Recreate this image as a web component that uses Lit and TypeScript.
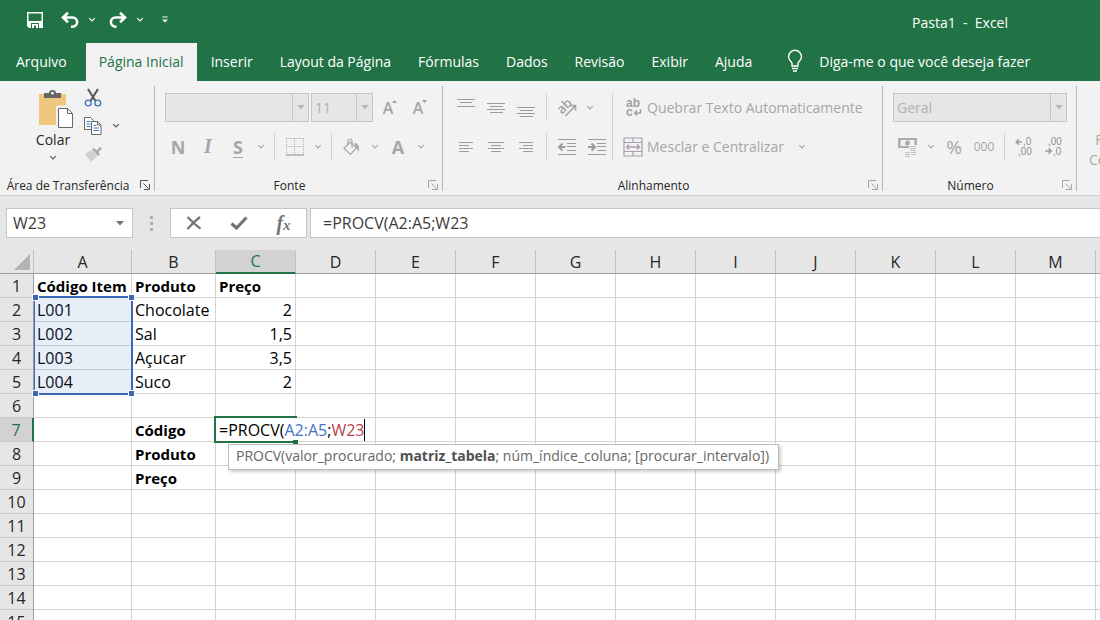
import { LitElement, html, css, svg, nothing } from "lit";
import { customElement, state } from "lit/decorators.js";
import { classMap } from "lit/directives/class-map.js";

const GREY = "#a6a6a6";

const icon = (w: number, h: number, body: unknown) =>
  html`<svg width=${w} height=${h} viewBox="0 0 ${w} ${h}" fill="none" aria-hidden="true">${body}</svg>`;

const chevron = icon(8, 6, svg`<path d="M1.2 1.2 4 4l2.8-2.8" stroke="currentColor" stroke-width="1.2"/>`);
const triangle = icon(8, 5, svg`<path d="M0 0h8L4 4.5z" fill="currentColor"/>`);
const launcher = icon(
  10,
  10,
  svg`<path d="M.5 8V.5H8M3.5 3.5l5 5M9.5 4v5.5H4" stroke="currentColor"/>`
);

const lines = (rows: number[][]) =>
  icon(
    20,
    20,
    rows.map(([x, y, w]) => svg`<path d="M${x} ${y + 0.5}h${w}" stroke="#9c9c9c"/>`)
  );

const icons = {
  save: icon(
    16,
    16,
    svg`<path d="M0 0h16v16H2l-2-2z" fill="#fff"/><path d="M1.500 1.500h13V9h-13zM4 11h8v5H4z" fill="#217346"/><path d="M5 12h6v4H9v-2.500H7V16H5z" fill="#fff"/>`
  ),
  undo: icon(
    18,
    16,
    svg`<path d="M2 5.500h9.500a4.600 4.600 0 0 1 0 9.200H10" stroke="#fff" stroke-width="2.600"/><path d="M7 .8 2 5.500l5 4.700" stroke="#fff" stroke-width="2.600"/>`
  ),
  redo: icon(
    18,
    16,
    svg`<path d="M16 5.500H6.500a4.600 4.600 0 0 0 0 9.200h1" stroke="#fff" stroke-width="2.600"/><path d="m11 .8 5 4.700-5 4.700" stroke="#fff" stroke-width="2.600"/>`
  ),
  customize: icon(6, 8, svg`<path d="M.5 1h5" stroke="#fff"/><path d="M0 3.500h6l-3 3z" fill="#fff"/>`),
  bulb: icon(
    16,
    22,
    svg`<path d="M5 16v-2.500C5 11.500 1.500 10.500 1.500 6.800a6.500 6.500 0 0 1 13 0C14.500 10.500 11 11.500 11 13.500V16zM5 18.500h6M6 21h4" stroke="#fff" stroke-width="1.400"/>`
  ),
  paste: icon(
    36,
    40,
    svg`<path d="M1 4h27v31H1z" fill="#eec77c"/><path d="M6 3h5a3.500 3 0 0 1 7 0h5v5H6z" fill="#666"/><circle cx="14.500" cy="3.200" r="1.400" fill="#f2f2f2"/><path d="M19.500 17h9l6 6v15h-15z" fill="#fff" stroke="#f2f2f2" stroke-width="3"/><path d="M20.500 18.500h9l5 5V37.500h-14z" fill="#fff" stroke="#666"/><path d="M29.500 18.500v5h5" stroke="#666"/>`
  ),
  cut: icon(
    18,
    18,
    svg`<path d="M4 0 11.500 12M14 0 6.500 12" stroke="#555" stroke-width="2"/><circle cx="4.200" cy="14" r="2.900" stroke="#3b78b8" stroke-width="1.400"/><circle cx="13.800" cy="14" r="2.900" stroke="#3b78b8" stroke-width="1.400"/>`
  ),
  copy: icon(
    18,
    18,
    svg`<path d="M.5.500h6l3 3v9h-9z" fill="#fff" stroke="#666"/><path d="M2.500 4.500h4M2.500 7h4M2.500 9.500h4" stroke="#3b78b8"/><path d="M7.500 4.500h6l3.500 3.500v9.500H7.500z" fill="#fff" stroke="#666"/><path d="M13.500 4.500V8H17" stroke="#666"/><path d="M9.500 8.500h3M9.500 11h5.500M9.500 13.500h5.500" stroke="#3b78b8"/>`
  ),
  painter: icon(
    18,
    16,
    svg`<path d="M1 8l7-4 5 6-6 6z" fill="#d4cfcf"/><path d="M8 3l2-1 6 6-2 2z" fill="#aaa6a6"/><path d="m12 5 4-4 2 1.500-4 4z" fill="#aaa6a6"/>`
  ),
  borders: icon(
    18,
    18,
    svg`<path d="M.5.500h17M.5 8.500h17M.5 0v17M8.500 0v17M17.500 0v17" stroke="#b9a9c0" stroke-dasharray="1 1"/><path d="M0 17h18" stroke="#9c9c9c" stroke-width="1.200"/>`
  ),
  fill: icon(
    18,
    18,
    svg`<path d="M7 4 13.500 10 7.500 16.500 1 10.500z" stroke="${GREY}" stroke-width="1.200"/><path d="M5 7.500V3a2 2 0 0 1 4 0v6.500" stroke="${GREY}" stroke-width="1.200"/><path d="M11 5c4 0 6 3 4.500 10-.5-3-1-4.500-2.500-6z" fill="${GREY}"/>`
  ),
  orientation: icon(
    20,
    20,
    svg`<text x="0" y="13" transform="rotate(-45 7 9)" font-family="Open Sans, sans-serif" font-size="13" font-weight="600" fill="#a0a0a0">ab</text><path d="M8.500 18 18 8M13.500 7.500h5v5" stroke="#a0a0a0" stroke-width="1.500"/>`
  ),
  outdent: icon(
    20,
    18,
    svg`<path d="M1 1.500h18M10 5.500h9M10 8.500h9M10 12.500h9M1 16.500h18" stroke="#9c9c9c"/><path d="M8.500 9H2M5.500 5.500 2 9l3.500 3.500" stroke="#9c9c9c" stroke-width="2"/>`
  ),
  indent: icon(
    20,
    18,
    svg`<path d="M1 1.500h18M10 5.500h9M10 8.500h9M10 12.500h9M1 16.500h18" stroke="#9c9c9c"/><path d="M1 9h6.500M4.500 5.500 8 9l-3.500 3.500" stroke="#9c9c9c" stroke-width="2"/>`
  ),
  wrap: icon(
    20,
    20,
    svg`<g font-family="Liberation Sans, sans-serif" font-size="12" font-weight="700" fill="#a0a0a0"><text x="3" y="9">ab</text><text x="3" y="18">c</text></g><path d="M17.500 11v4H11.500M14 12.500 11.500 15l2.500 2.500" stroke="#a0a0a0" stroke-width="1.300"/>`
  ),
  merge: icon(
    20,
    20,
    svg`<path d="M1 1h18v18H1zM1 5.500h18M1 14.500h18M10 1v4.500M10 14.500V19" stroke="#a99fad" stroke-width="1.200"/><path d="M3.500 10h13M6 7.500 3.500 10 6 12.500M14 7.500l2.500 2.500-2.500 2.500" stroke="#a99fad" stroke-width="1.300"/>`
  ),
  currency: icon(
    20,
    20,
    svg`<path d="M0 1h19v10H0z" fill="#b0aab2"/><path d="M2.500 3h14v6h-14z" fill="#f2f2f2"/><circle cx="9.500" cy="6" r="2.500" fill="#b0aab2"/><path d="M11 8h8v11h-5v1H6v-6h5z" fill="#f2f2f2"/><path d="M12 9.500h6M12 11.500h6M12 13.500h6M7 15.500h5M7 17.500h5M7 19.500h5M13 15.500h5M13 17.500h5" stroke="#c4bec6"/>`
  ),
  cancel: icon(
    16,
    14,
    svg`<path d="M1.500 1c3 3 9 9 13 11.500M14 1C10 4 5 9 1.500 13" stroke="#757575" stroke-width="2.200"/>`
  ),
  confirm: icon(18, 14, svg`<path d="m1.500 7.500 5 4.500L16.500 1.500" stroke="#757575" stroke-width="3.200"/>`),
  corner: icon(16, 16, svg`<path d="M16 0v16H0z" fill="#b3b3b3"/>`),
};

const decimals = (first: string, second: string, arrowTop: boolean) =>
  icon(
    20,
    20,
    svg`<g font-family="Liberation Sans, sans-serif" font-size="10" fill="#8f8f8f"><text x=${arrowTop ? 8 : 3} y="8">${first}</text><text x=${arrowTop ? 3 : 8} y="18">${second}</text></g>${
      arrowTop
        ? svg`<path d="M7 5H1.500M4 2.200 1.200 5 4 7.800" stroke="#a0a0a0" stroke-width="1.600"/>`
        : svg`<path d="M0 14h6M3.500 11.200 6.300 14l-2.800 2.800" stroke="#a0a0a0" stroke-width="1.600"/>`
    }`
  );

const TABS = [
  "Arquivo", "Página Inicial", "Inserir", "Layout da Página", "Fórmulas",
  "Dados", "Revisão", "Exibir", "Ajuda",
];

const COLUMNS = "ABCDEFGHIJKLMN".split("");

interface Cell { text: string; bold?: boolean; right?: boolean }

const CELLS: Record<string, Cell> = {
  A1: { text: "Código Item", bold: true },
  B1: { text: "Produto", bold: true },
  C1: { text: "Preço", bold: true },
  A2: { text: "L001" }, B2: { text: "Chocolate" }, C2: { text: "2", right: true },
  A3: { text: "L002" }, B3: { text: "Sal" }, C3: { text: "1,5", right: true },
  A4: { text: "L003" }, B4: { text: "Açucar" }, C4: { text: "3,5", right: true },
  A5: { text: "L004" }, B5: { text: "Suco" }, C5: { text: "2", right: true },
  B7: { text: "Código", bold: true },
  B8: { text: "Produto", bold: true },
  B9: { text: "Preço", bold: true },
};

const base = css`
  :host { box-sizing: border-box; font-family: "Open Sans", "Noto Sans", sans-serif; font-size: 14px; }
  * { box-sizing: border-box; }
  button, input, select { font: inherit; color: inherit; border: 0; margin: 0; padding: 0; background: none; border-radius: 0; }
  button { display: flex; align-items: center; justify-content: center; }
  svg { display: block; flex: none; overflow: visible; }
`;

@customElement("excel-header")
class ExcelHeader extends LitElement {
  @state() active = "Página Inicial";

  static styles = [
    base,
    css`
      :host { display: block; background: #217346; color: #fff; }
      .title { display: flex; align-items: center; height: 43px; padding: 0 92px 3px 22px; }
      .tool { width: 26px; height: 26px; }
      .more { width: 14px; height: 26px; margin-left: 2px; }
      .undo { margin-left: 9px; }
      .redo { margin-left: 6px; }
      .custom { margin-left: 11px; }
      .name { margin-left: auto; white-space: pre; padding-top: 4px; }
      .tabs { display: flex; height: 38px; padding-left: 4px; }
      .tabs button { padding-bottom: 2px; }
      .tab { padding: 0 12px; margin-right: 3px; white-space: nowrap; }
      .tab:first-child { margin-right: 7px; }
      .on { background: #f2f2f2; color: #217346; margin-right: 2px; padding: 0 13px; }
      .tell { gap: 16px; margin-left: 20px; white-space: nowrap; }
    `,
  ];

  render() {
    return html`
      <div class="title">
        <button class="tool" aria-label="Salvar">${icons.save}</button>
        <button class="tool undo" aria-label="Desfazer">${icons.undo}</button>
        <button class="more" aria-label="Opções de desfazer">${chevron}</button>
        <button class="tool redo" aria-label="Refazer">${icons.redo}</button>
        <button class="more" aria-label="Opções de refazer">${chevron}</button>
        <button class="more custom" aria-label="Personalizar">${icons.customize}</button>
        <span class="name">Pasta1  -  Excel</span>
      </div>
      <nav class="tabs">
        ${TABS.map(
          (t) => html`<button
            class=${classMap({ tab: true, on: t === this.active })}
            @click=${() => (this.active = t)}
          >${t}</button>`
        )}
        <button class="tell">${icons.bulb}Diga-me o que você deseja fazer</button>
      </nav>
    `;
  }
}

@customElement("excel-ribbon")
class ExcelRibbon extends LitElement {
  static styles = [
    base,
    css`
      :host { display: flex; height: 115px; background: #f2f2f2; border-bottom: 1px solid #cfcfcf; overflow: hidden; padding-top: 5px; color: #a6a6a6; }
      .group { display: flex; flex-direction: column; flex: none; height: 105px; border-right: 1px solid #b8b8b8; }
      .clip { width: 155px; }
      .font { width: 288px; }
      .align { width: 440px; }
      .num { width: 194px; }
      .styles { border-right: 0; padding: 44px 0 0 12px; line-height: 20px; text-align: center; }
      .styles span { display: flex; align-items: center; justify-content: center; gap: 6px; }
      .body { flex: 1; display: flex; padding-top: 7px; }
      .foot { display: flex; align-items: center; height: 20px; margin-bottom: -4px; font-size: 12px; color: #262626; }
      .foot span { flex: 1; text-align: center; white-space: nowrap; }
      .foot button { width: 18px; color: #a6a6a6; }
      .clip .foot button { color: #555; }
      .stack { display: flex; flex-direction: column; gap: 10px; }
      .row { display: flex; align-items: center; height: 29px; }
      .pad { padding-left: 10px; }
      .pad8 { padding-left: 8px; }
      .b { width: 30px; height: 28px; flex: none; }
      .c { width: 16px; height: 28px; flex: none; }
      .glyph { font-size: 18px; font-weight: 700; }
      .serif { font-family: "Liberation Serif", serif; font-style: italic; font-size: 20px; }
      .under { text-decoration: underline; text-underline-offset: 3px; text-decoration-thickness: 1px; }
      .case { font-size: 16px; font-weight: 600; }
      .case svg { margin: -14px 0 0 -1px; }
      .sep { width: 1px; height: 27px; margin: 0 5px; background: #d0d0d0; flex: none; }
      .tall { height: 68px; margin: 0; }
      .pick { display: grid; grid-template-columns: 1fr 16px; height: 29px; background: #e6e6e6; border: 1px solid #c6c6c6; }
      .pick select { grid-area: 1 / 1 / 2 / 3; appearance: none; padding-left: 3px; opacity: 1; color: #b1b1b1; }
      .pick span { grid-area: 1 / 2; display: flex; align-items: center; justify-content: center; border-left: 1px solid #c6c6c6; pointer-events: none; color: #b8b8b8; }
      .face { width: 144px; margin-right: 2px; }
      .size { width: 62px; margin-right: 2px; }
      .fmt { width: 174px; }
      .text { gap: 4px; white-space: nowrap; }
      .text + .c { margin-left: 10px; }
      .start { align-self: flex-start; }
      .clip .body { padding: 4px 0 0 28px; }
      .paste { flex-direction: column; width: 50px; height: 76px; color: #262626; justify-content: flex-start; }
      .paste svg:first-child { margin-left: 6px; }
      .paste svg:last-child { margin-top: 6px; color: #555; }
      .side { display: flex; flex-direction: column; margin-top: -6px; }
      .side .row { height: 28px; }
      .side .c { color: #555; }
      .pct { font-size: 19px; }
      .zeros { font-size: 12px; }
    `,
  ];

  foot(label: string) {
    return html`<div class="foot"><span>${label}</span><button aria-label="Mais opções de ${label}">${launcher}</button></div>`;
  }

  more(label: string) {
    return html`<button class="c" aria-label="Opções de ${label}">${chevron}</button>`;
  }

  tool(label: string, body: unknown, extra = "") {
    return html`<button class="b ${extra}" aria-label=${label}>${body}</button>`;
  }

  pick(cls: string, label: string, value: string) {
    return html`<div class="pick ${cls}">
      <select aria-label=${label} disabled><option>${value}</option></select><span>${triangle}</span>
    </div>`;
  }

  render() {
    return html`
      <section class="group clip">
        <div class="body">
          <button class="paste">${icons.paste}Colar${chevron}</button>
          <div class="side">
            <div class="row">${this.tool("Recortar", icons.cut)}</div>
            <div class="row">${this.tool("Copiar", icons.copy)}${this.more("copiar")}</div>
            <div class="row">${this.tool("Pincel de Formatação", icons.painter)}</div>
          </div>
        </div>
        ${this.foot("Área de Transferência")}
      </section>

      <section class="group font">
        <div class="body"><div class="stack">
          <div class="row pad">
            ${this.pick("face", "Fonte", "")} ${this.pick("size", "Tamanho da fonte", "11")}
            ${this.tool("Aumentar fonte", html`A${icon(5, 4, svg`<path d="M0 4h5L2.500 1z" fill="#a0a0a0"/>`)}`, "case")}
            ${this.tool("Diminuir fonte", html`A${icon(5, 4, svg`<path d="M0 1h5L2.500 4z" fill="#a0a0a0"/>`)}`, "case")}
          </div>
          <div class="row pad8">
            ${this.tool("Negrito", "N", "glyph")} ${this.tool("Itálico", "I", "glyph serif")}
            ${this.tool("Sublinhado", "S", "glyph under")} ${this.more("sublinhado")}
            <i class="sep"></i>
            ${this.tool("Bordas", icons.borders)} ${this.more("bordas")}
            <i class="sep"></i>
            ${this.tool("Cor de preenchimento", icons.fill)} ${this.more("preenchimento")}
            ${this.tool("Cor da fonte", "A", "glyph")} ${this.more("cor da fonte")}
          </div>
        </div></div>
        ${this.foot("Fonte")}
      </section>

      <section class="group align">
        <div class="body">
          <div class="stack pad8">
            <div class="row">
              ${this.tool("Alinhar em cima", lines([[1, 1, 18], [4, 4, 12], [1, 8, 18]]))}
              ${this.tool("Alinhar no meio", lines([[1, 5, 18], [4, 8, 13], [1, 11, 18], [4, 14, 13]]))}
              ${this.tool("Alinhar embaixo", lines([[1, 9, 18], [4, 12, 13], [1, 15, 18], [4, 18, 13]]))}
              <i class="sep"></i>
              ${this.tool("Orientação", icons.orientation)}${this.more("orientação")}
            </div>
            <div class="row">
              ${this.tool("Alinhar à esquerda", lines([[3, 5, 14], [3, 8, 10], [3, 11, 14], [3, 14, 10]]))}
              ${this.tool("Centralizar", lines([[2, 5, 16], [5, 8, 10], [2, 11, 16], [5, 14, 10]]))}
              ${this.tool("Alinhar à direita", lines([[3, 5, 14], [7, 8, 10], [3, 11, 14], [7, 14, 10]]))}
              <i class="sep"></i>
              ${this.tool("Diminuir recuo", icons.outdent)} ${this.tool("Aumentar recuo", icons.indent)}
            </div>
          </div>
          <i class="sep tall"></i>
          <div class="stack pad">
            <button class="row text start">${icons.wrap}Quebrar Texto Automaticamente</button>
            <div class="row"><button class="row text">${icons.merge}Mesclar e Centralizar</button>${this.more("mesclar")}</div>
          </div>
        </div>
        ${this.foot("Alinhamento")}
      </section>

      <section class="group num">
        <div class="body"><div class="stack pad">
          <div class="row">${this.pick("fmt", "Formato de número", "Geral")}</div>
          <div class="row">
            ${this.tool("Formato de contabilização", icons.currency)} ${this.more("contabilização")}
            ${this.tool("Porcentagem", "%", "pct")} ${this.tool("Milhares", "000", "zeros")}
            <i class="sep"></i>
            ${this.tool("Aumentar casas decimais", decimals(",0", ",00", true))}
            ${this.tool("Diminuir casas decimais", decimals(",00", ",0", false))}
          </div>
        </div></div>
        ${this.foot("Número")}
      </section>

      <section class="group styles">
        <span>Formatação</span><span>Condicional ${chevron}</span>
      </section>
    `;
  }
}

@customElement("formula-bar")
class FormulaBar extends LitElement {
  static styles = [
    base,
    css`
      :host { display: flex; padding: 12px 0; background: #e6e6e6; color: #3c3c3c; font-size: 16px; }
      .box { display: flex; align-items: center; height: 30px; background: #fff; border: 1px solid #c6c6c6; }
      .name { width: 127px; margin-left: 6px; }
      .name input { flex: 1; min-width: 0; padding-left: 6px; }
      .name button { width: 24px; height: 28px; color: #777; }
      .grip { display: flex; flex-direction: column; justify-content: center; gap: 3px; width: 37px; align-items: center; }
      .grip i { width: 3px; height: 3px; background: #b0b0b0; }
      .tools { width: 137px; margin-right: 3px; }
      .tools button { flex: 1; height: 28px; }
      .tools .fx { font-family: "Liberation Serif", serif; font-style: italic; font-weight: 700; font-size: 20px; color: #757575; }
      .fx small { font-size: 15px; padding-top: 5px; }
      .formula { flex: 1; border-right: 0; }
      .formula input { width: 100%; padding-left: 12px; outline: 0; }
    `,
  ];

  render() {
    return html`
      <div class="box name">
        <input aria-label="Caixa de nome" .value=${"W23"} />
        <button aria-label="Nomes">${triangle}</button>
      </div>
      <div class="grip"><i></i><i></i><i></i></div>
      <div class="box tools">
        <button aria-label="Cancelar">${icons.cancel}</button>
        <button aria-label="Inserir">${icons.confirm}</button>
        <button class="fx" aria-label="Inserir função">f<small>x</small></button>
      </div>
      <div class="box formula">
        <input aria-label="Fórmula" .value=${"=PROCV(A2:A5;W23"} />
      </div>
    `;
  }
}

@customElement("sheet-grid")
class SheetGrid extends LitElement {
  static styles = [
    base,
    css`
      :host { display: block; overflow: hidden; background: #fff; color: #000; }
      table { table-layout: fixed; border-collapse: separate; border-spacing: 0; width: 1176px; font-size: 16px; line-height: 20px; }
      .head { width: 34px; }
      .cA { width: 98px; }
      .cB { width: 84px; }
      .col { width: 80px; }
      tr { height: 24px; }
      th { font-weight: 400; padding: 0; background: #e6e6e6; color: #262626; border-right: 1px solid #c0c0c0; border-bottom: 1px solid #9e9e9e; }
      tbody th { border-right-color: #9e9e9e; border-bottom-color: #c8c8c8; }
      .corner svg { margin: 0 3px 0 auto; }
      th.on { background: #d2d2d2; color: #217346; border-bottom: 2px solid #217346; }
      tbody th.on { border-bottom: 1px solid #c8c8c8; border-right: 2px solid #217346; }
      td { position: relative; padding: 0 3px; white-space: nowrap; border-right: 1px solid #d4d4d4; border-bottom: 1px solid #d4d4d4; }
      .bold { font-weight: 700; font-size: 15px; }
      .right { text-align: right; }
      .range { position: absolute; z-index: 1; left: 0; top: -2px; width: 99px; height: 99px; border: 2px solid #3a66b4; border-left-width: 1px; background: rgba(68, 114, 196, 0.12); }
      .range i { position: absolute; box-sizing: content-box; width: 5px; height: 5px; background: #3a66b4; border: 1px solid #fff; }
      .tl { left: -3px; top: -4px; }
      .tr { right: -4px; top: -4px; }
      .bl { left: -3px; bottom: -4px; }
      .br { right: -4px; bottom: -4px; }
      .editor { position: absolute; z-index: 2; left: -2px; top: -2px; height: 27px; display: flex; align-items: center; border: 2px solid #217346; border-right-width: 0; width: 83px; }
      .editor b { font-weight: 400; display: flex; align-items: center; height: 22px; background: #fff; padding-left: 3px; }
      .editor b::after { content: ""; width: 1px; height: 22px; background: #000; }
      .handle { position: absolute; right: -1px; bottom: -3px; width: 5px; height: 4px; background: #217346; }
      .blue { color: #4472c4; }
      .red { color: #b8404c; }
      .tip { position: absolute; z-index: 3; left: 12px; top: 26px; height: 26px; padding: 0 9px 0 7px; border: 1px solid #bdbdbd; background: #fff; color: #666; font-size: 14px; line-height: 22px; box-shadow: 2px 2px 3px rgba(0, 0, 0, 0.2); }
      .tip strong { color: #505050; }
    `,
  ];

  cell(ref: string) {
    const c = CELLS[ref];
    return html`<td class=${classMap({ bold: !!c?.bold, right: !!c?.right })}>${c?.text}${
      ref === "A2"
        ? html`<div class="range"><i class="tl"></i><i class="tr"></i><i class="bl"></i><i class="br"></i></div>`
        : nothing
    }${
      ref === "C7"
        ? html`<div class="editor"><b>=PROCV(<span class="blue">A2:A5</span>;<span class="red">W23</span></b><i class="handle"></i></div>
            <div class="tip" role="tooltip">PROCV(valor_procurado; <strong>matriz_tabela</strong>; núm_índice_coluna; [procurar_intervalo])</div>`
        : nothing
    }</td>`;
  }

  render() {
    return html`<table>
      <colgroup>
        <col class="head" /><col class="cA" /><col class="cB" />
        ${COLUMNS.slice(2).map(() => html`<col class="col" />`)}
      </colgroup>
      <thead>
        <tr>
          <th class="corner">${icons.corner}</th>
          ${COLUMNS.map((c) => html`<th class=${classMap({ on: c === "C" })}>${c}</th>`)}
        </tr>
      </thead>
      <tbody>
        ${Array.from({ length: 15 }, (_, i) => i + 1).map(
          (r) => html`<tr>
            <th class=${classMap({ on: r === 7 })}>${r}</th>
            ${COLUMNS.map((c) => this.cell(c + r))}
          </tr>`
        )}
      </tbody>
    </table>`;
  }
}

@customElement("app-root")
class AppRoot extends LitElement {
  static styles = css`
    :host { display: flex; flex-direction: column; height: 100vh; overflow: hidden; background: #fff; }
    .grid { flex: 1; min-height: 0; }
  `;

  render() {
    return html`
      <excel-header></excel-header>
      <excel-ribbon></excel-ribbon>
      <formula-bar></formula-bar>
      <sheet-grid class="grid"></sheet-grid>
    `;
  }
}
